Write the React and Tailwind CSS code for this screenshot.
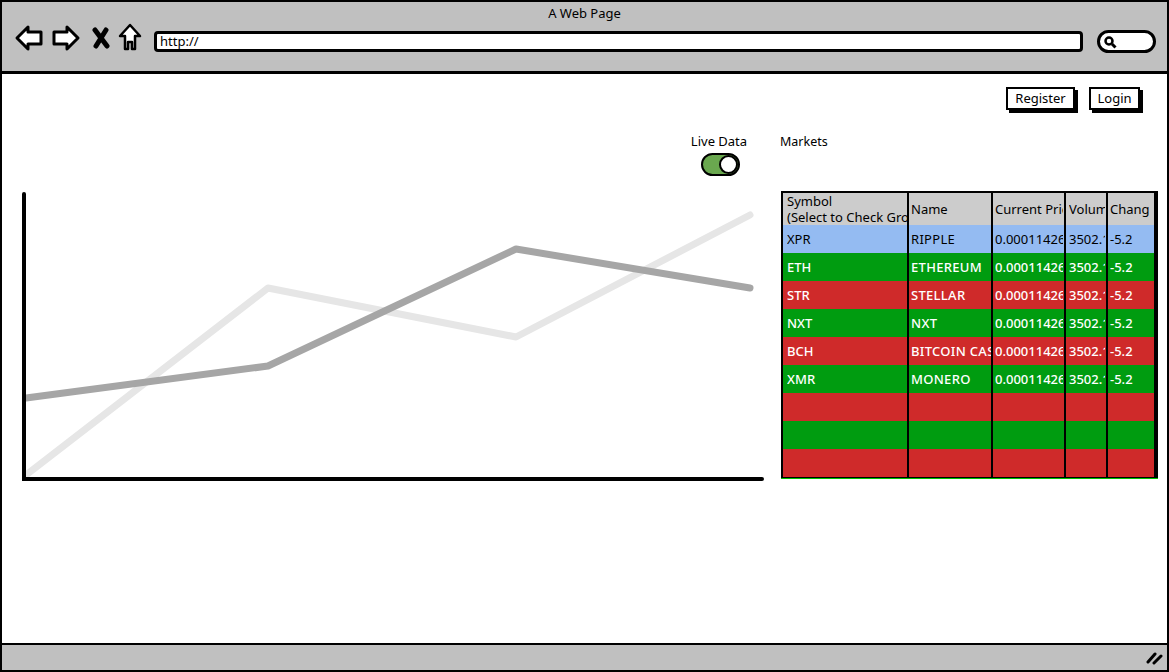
const rows = [
  { symbol: "XPR", name: "RIPPLE", price: "0.00011426", volume: "3502.12", change: "-5.2", tone: "blue" },
  { symbol: "ETH", name: "ETHEREUM", price: "0.00011426", volume: "3502.12", change: "-5.2", tone: "green" },
  { symbol: "STR", name: "STELLAR", price: "0.00011426", volume: "3502.12", change: "-5.2", tone: "red" },
  { symbol: "NXT", name: "NXT", price: "0.00011426", volume: "3502.12", change: "-5.2", tone: "green" },
  { symbol: "BCH", name: "BITCOIN CASH", price: "0.00011426", volume: "3502.12", change: "-5.2", tone: "red" },
  { symbol: "XMR", name: "MONERO", price: "0.00011426", volume: "3502.12", change: "-5.2", tone: "green" },
  { symbol: "", name: "", price: "", volume: "", change: "", tone: "red" },
  { symbol: "", name: "", price: "", volume: "", change: "", tone: "green" },
  { symbol: "", name: "", price: "", volume: "", change: "", tone: "red" },
];

const toneClass = {
  blue: "bg-[#94bbf2] text-black",
  green: "bg-[#009c10] text-white font-medium",
  red: "bg-[#cf2a2a] text-white font-medium",
};

const BrowserIcons = () => (
  <div className="flex items-center">
    <svg width="30" height="28" viewBox="0 0 30 28" className="ml-[12px]">
      <path d="M3 14 L14 3 L14 8 L27 8 L27 20 L14 20 L14 25 Z" fill="#fff" stroke="#000" strokeWidth="3" strokeLinejoin="round" />
    </svg>
    <svg width="30" height="28" viewBox="0 0 30 28" className="ml-[7px]">
      <path d="M27 14 L16 3 L16 8 L3 8 L3 20 L16 20 L16 25 Z" fill="#fff" stroke="#000" strokeWidth="3" strokeLinejoin="round" />
    </svg>
    <svg width="18" height="22" viewBox="0 0 18 22" className="ml-[11px]">
      <path d="M3 3 L15 19 M14 3 L4 19" stroke="#000" strokeWidth="5" strokeLinecap="round" />
    </svg>
    <svg width="24" height="29" viewBox="0 0 24 29" className="ml-[8px]">
      <path d="M12 2 L22 13 L17 13 L17 26 L14 26 L14 19 L10 19 L10 26 L7 26 L7 13 L2 13 Z" fill="#fff" stroke="#000" strokeWidth="2.5" strokeLinejoin="round" />
    </svg>
  </div>
);

const Chart = () => (
  <svg width="742" height="290" viewBox="22 192 742 290" className="block">
    <polyline points="26,475 268,288 516,337 750,215" fill="none" stroke="#e6e6e6" strokeWidth="7" strokeLinecap="round" strokeLinejoin="round" />
    <polyline points="26,398 268,366 516,249 750,288" fill="none" stroke="#a6a6a6" strokeWidth="7" strokeLinecap="round" strokeLinejoin="round" />
    <path d="M24 194 L24 479 L762 479" fill="none" stroke="#000" strokeWidth="4" strokeLinecap="round" />
  </svg>
);

// inner block clips the text a little before the column line
const Cell = ({ children, className = "", clip = "w-full" }) => (
  <div className={`overflow-hidden whitespace-nowrap border-r-2 border-black flex items-center pl-[2px] ${className}`}>
    <div className={`overflow-hidden ${clip}`}>{children}</div>
  </div>
);

const MarketsTable = () => (
  <div className="w-[377px] h-[287px] border-2 border-black border-b-[3px] grid grid-cols-[126px_84px_73px_42px_1fr] grid-rows-[32px_repeat(9,28px)] text-[13px] leading-[16px]">
    <Cell className="bg-[#cccccc] text-black pl-[4px]">
      Symbol<br />(Select to Check Group)
    </Cell>
    <Cell className="bg-[#cccccc] text-black">Name</Cell>
    <Cell className="bg-[#cccccc] text-black" clip="w-[68px]">Current Price</Cell>
    <Cell className="bg-[#cccccc] text-black pl-[3px]" clip="w-[36px]">Volume</Cell>
    <Cell className="bg-[#cccccc] text-black border-r-0" clip="w-[39px]">Change</Cell>
    {rows.map((row, idx) => (
      <div key={idx} className="contents">
        <Cell className={`${toneClass[row.tone]} pl-[4px]`}>{row.symbol}</Cell>
        <Cell className={`${toneClass[row.tone]} tracking-[0.3px]`}>{row.name}</Cell>
        <Cell className={toneClass[row.tone]} clip="w-[68px]">{row.price}</Cell>
        <Cell className={`${toneClass[row.tone]} pl-[3px]`} clip="w-[36px]">{row.volume}</Cell>
        <Cell className={`${toneClass[row.tone]} border-r-0`} clip="w-[39px]">{row.change}</Cell>
      </div>
    ))}
  </div>
);

export default function App() {
  return (
    <div className="w-[1169px] h-[672px] border-2 border-black flex flex-col overflow-hidden bg-white text-black font-['Noto_Sans',sans-serif] text-[13px]">
      <header className="h-[72px] bg-[#c0c0c0] border-b-[3px] border-black shrink-0">
        <div className="text-center leading-[16px] pt-[3px]">A Web Page</div>
        <div className="flex items-center pt-[1px]">
          <BrowserIcons />
          <div className="mt-[8px] ml-[12px] w-[929px] h-[21px] bg-white border-[3px] border-black rounded-[4px] pl-[3px] leading-[15px]">
            http://
          </div>
          <div className="mt-[8px] ml-[14px] w-[59px] h-[23px] bg-white border-[3px] border-black rounded-full flex items-center pl-[3px]">
            <svg width="14" height="14" viewBox="0 0 14 14">
              <circle cx="6" cy="6" r="3.5" fill="none" stroke="#000" strokeWidth="2.5" />
              <path d="M9 9 L12.5 12.5" stroke="#000" strokeWidth="3" />
            </svg>
          </div>
        </div>
      </header>

      <main className="flex-1 flex flex-col pt-[13px] pl-[20px]">
        <div className="flex justify-end gap-[14px] pr-[27px]">
          <button className="w-[69px] h-[23px] bg-white border-2 border-black shadow-[3px_3px_0_#000] leading-none">Register</button>
          <button className="w-[51px] h-[23px] bg-white border-2 border-black shadow-[3px_3px_0_#000] leading-none">Login</button>
        </div>

        <div className="flex mt-[23px]">
          <div className="w-[742px] shrink-0">
            <div className="flex flex-col items-end pr-[16px] h-[59px]">
              <div className="leading-[16px] w-[58px] text-center whitespace-nowrap">Live Data</div>
              <div className="mt-[4px] mr-[8px] w-[39px] h-[23px] bg-[#6aa84f] border-2 border-black rounded-full flex justify-end">
                <div className="w-[19px] h-[19px] bg-white border-2 border-black rounded-full" />
              </div>
            </div>
            <Chart />
          </div>
          <div className="ml-[16px]">
            <div className="leading-[18px] h-[58px] text-[12.5px]">Markets</div>
            <div className="ml-[1px] border-b border-[#00c000]">
              <MarketsTable />
            </div>
          </div>
        </div>
      </main>

      <footer className="h-[27px] bg-[#c0c0c0] border-t-2 border-black shrink-0 flex items-center justify-end pr-[3px]">
        <svg width="18" height="14" viewBox="0 0 18 14">
          <path d="M2 11 L9 3 M8 12 L15 5" stroke="#000" strokeWidth="3" strokeLinecap="round" />
        </svg>
      </footer>
    </div>
  );
}
